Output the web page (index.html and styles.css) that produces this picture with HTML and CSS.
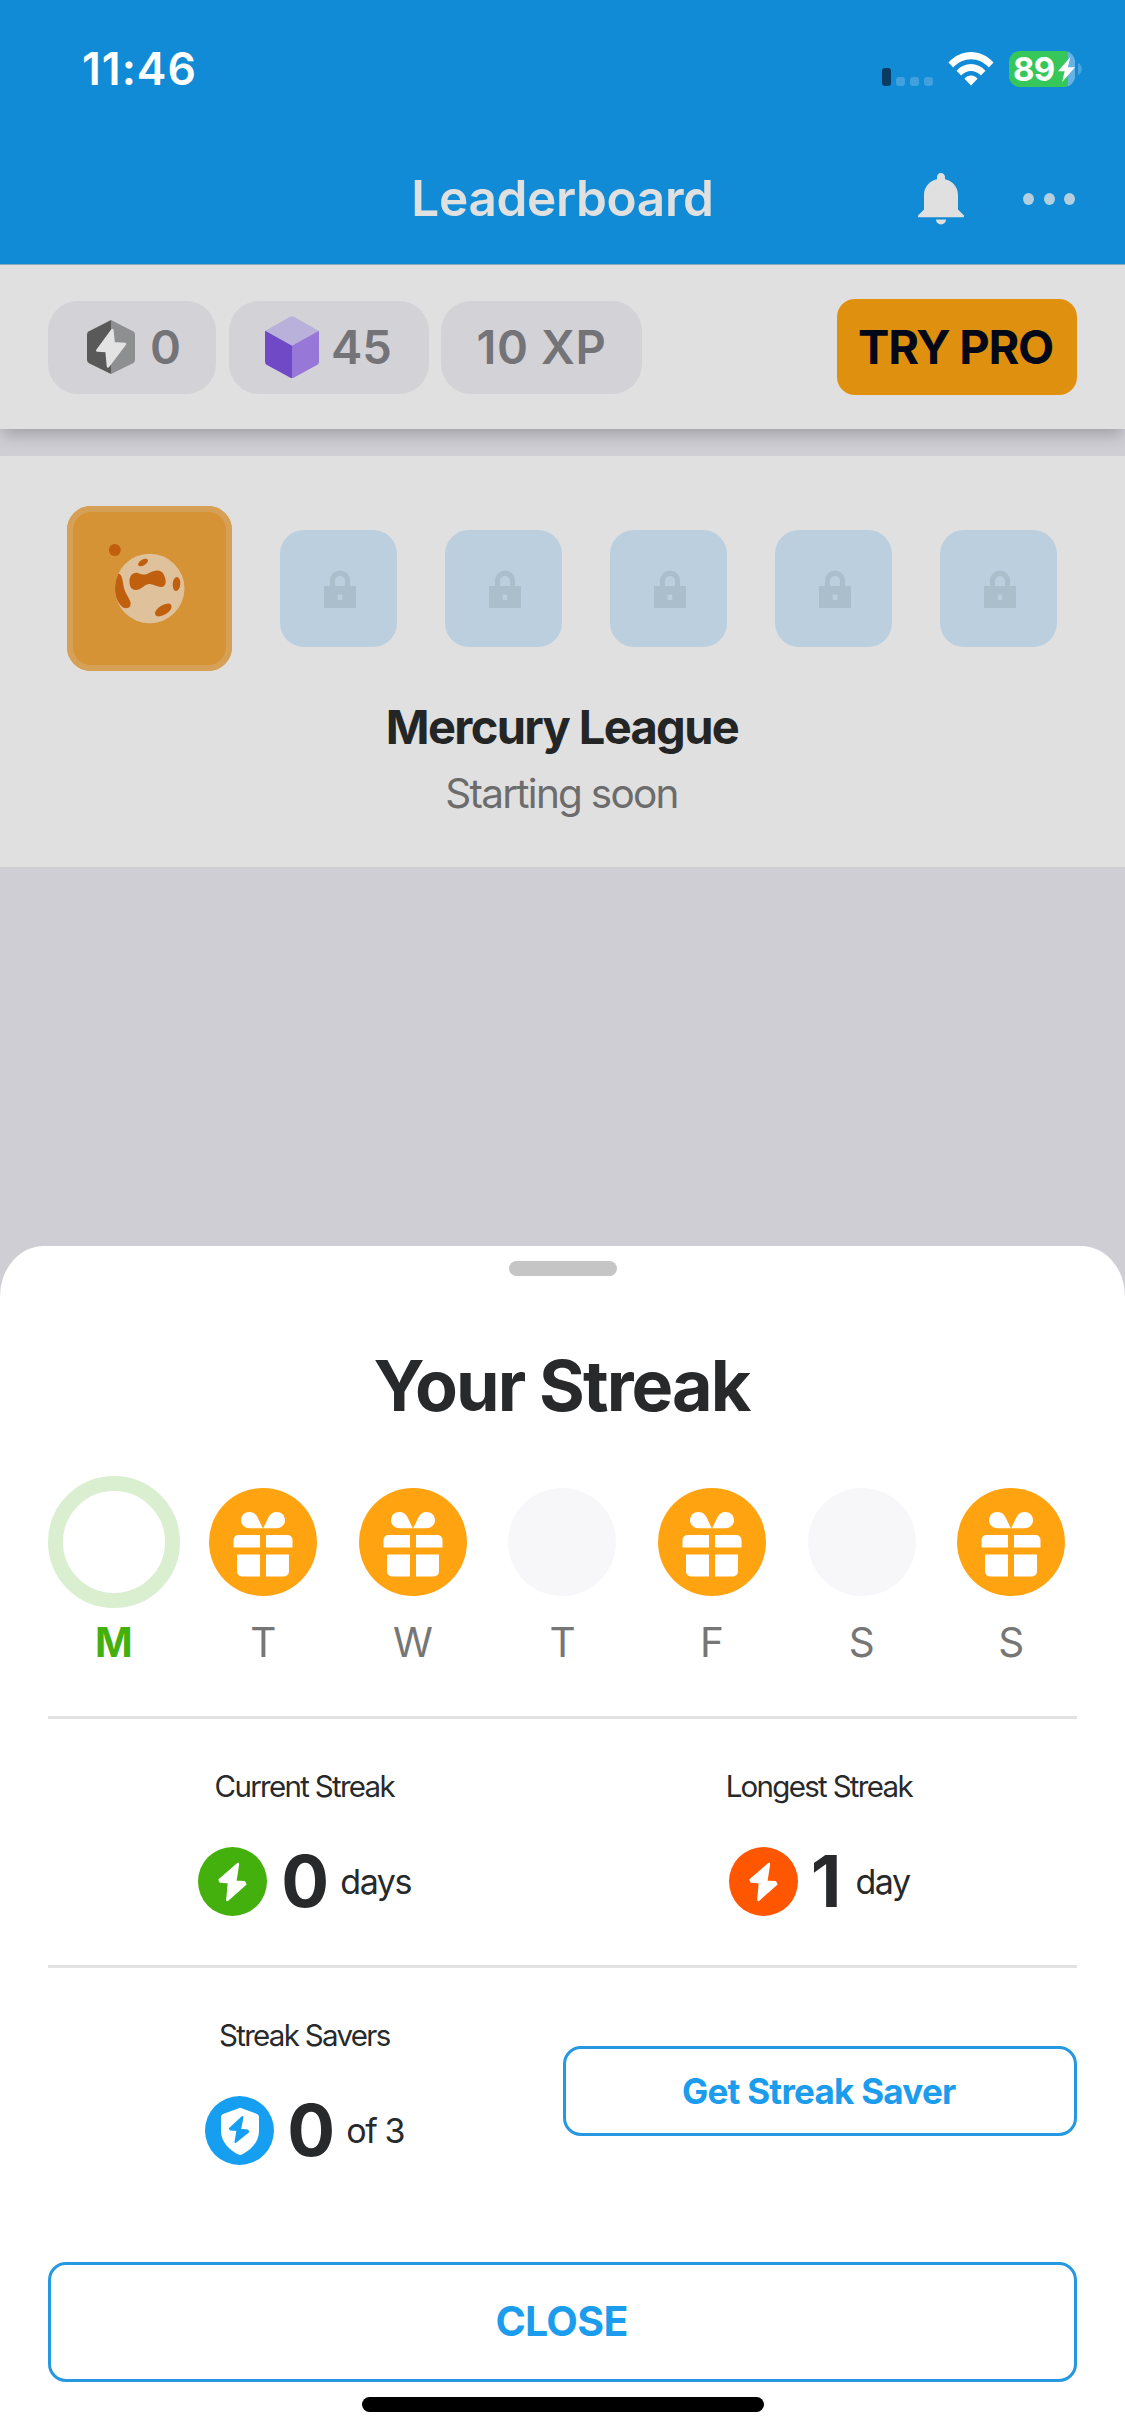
FILE: index.html
```html
<!DOCTYPE html>
<html lang="en">
<head>
<meta charset="utf-8">
<title>Leaderboard</title>
<link rel="stylesheet" href="styles.css">
</head>
<body>
<svg class="defs" aria-hidden="true">
  <symbol id="gift" viewBox="0 0 108 108">
    <g fill="#fff">
      <path d="M53.8 40.3H41C36 40.3 32 37 32 32.3 32 27.5 35.8 24 40.3 24c3.700 0 6.500 1.800 8.200 5.200z"/>
      <path d="M54.200 40.3H67C72 40.3 76 37 76 32.3 76 27.5 72.200 24 67.700 24c-3.700 0-6.500 1.800-8.200 5.200z"/>
      <path d="M51 47v12.500H24.500V52a5 5 0 0 1 5-5zM57 47v12.500h26.500V52a5 5 0 0 0-5-5z"/>
      <path d="M51 66.500v22H33a5 5 0 0 1-5-5v-17zM57 66.500v22h18a5 5 0 0 0 5-5v-17z"/>
    </g>
  </symbol>
  <symbol id="lock" viewBox="0 0 32 38">
    <path fill="#abbecb" fill-rule="evenodd" d="M0 16h6v-5.500a10 10 0 0 1 20 0V16h6v22H0zM11 16h10v-5a5 5 0 0 0-10 0zM13.700 24.500v5.500h4.600v-5.500z"/>
  </symbol>
  <symbol id="bolt" viewBox="0 0 69 69">
    <path fill="#fff" stroke="#fff" stroke-width="2.400" stroke-linejoin="round" d="M40 17 21.600 33 22.500 34.600l8.500.6L29.300 53 47.300 37.200 46.300 35.200l-9-.6z"/>
  </symbol>
</svg>
<div class="screen">
  <header class="top">
    <div class="status">
      <span class="clock">11:46</span>
      <div class="indicators">
        <div class="signal"><i class="bar"></i><i></i><i></i><i></i></div>
        <svg class="wifi" width="46" height="34" viewBox="0 0 46 34">
          <path fill="#fff" d="M0.500 10.500C13-3.500 33-3.500 45.500 10.500L40.800 15.500C31 4.500 15 4.500 5.200 15.500zM8.500 18.800C16.500 9.800 29.500 9.800 37.500 18.800L32.800 23.600C27.500 17.600 18.500 17.600 13.200 23.600zM16.500 26.800C20 22.500 26 22.500 29.500 26.800L23 33.500z"/>
        </svg>
        <div class="battery">
          <div class="cell"><span>89</span>
            <svg width="17" height="25" viewBox="0 0 17 25"><path fill="#fff" d="M12.300 0 0 14.200h6.600L4.200 25 17 10.300H9.900z"/></svg>
          </div>
          <svg width="4" height="12" viewBox="0 0 4 12"><path fill="#46a5df" d="M0 0c5 2 5 10 0 12z"/></svg>
        </div>
      </div>
    </div>
    <div class="nav">
      <h1>Leaderboard</h1>
      <div class="actions">
        <svg width="46" height="52" viewBox="0 0 46 52">
          <path fill="#e0e0e0" d="M23 0c2.300 0 4 1.700 4 4v2.300C34.500 8 40 14 40 22v14.500l5.500 5.500c1 1 .5 2.300-.8 2.300H1.300C0 44.300-.5 43 .5 42L6 36.500V22C6 14 11.500 8 19 6.300V4c0-2.300 1.700-4 4-4zM18 46.500h10a5 5 0 0 1-10 0z"/>
        </svg>
        <div class="more"><i></i><i></i><i></i></div>
      </div>
    </div>
  </header>

  <section class="stats">
    <div class="pill streak">
      <svg width="48" height="54" viewBox="0 0 48 54">
        <path fill="#595959" d="M24 0 2 11.200Q0 12.300 0 14.500V40q0 2 2 3.200L24 54z"/>
        <path fill="#8e8f90" d="M24 0 46 11.200Q48 12.300 48 14.500V40q0 2-2 3.200L24 54z"/>
        <path fill="#e3e3e3" stroke="#e3e3e3" stroke-width="2.500" stroke-linejoin="round" d="M25.300 10 10.300 30.500l9.200.5 1.500 15.500L38 24l-11.300-.8z"/>
      </svg>
      <span>0</span>
    </div>
    <div class="pill bits">
      <svg width="54" height="62" viewBox="0 0 54 62">
        <path fill="#bab1db" d="M25 .8q2-1 4 0L53.500 14.800 27 30 .5 14.800z"/>
        <path fill="#7049c6" d="M.3 14.800 27 29.700V62q-1 0-2-.6L2 49q-2-1-2-3.200V15.500z"/>
        <path fill="#9778d9" d="M53.700 14.800 27 29.700V62q1 0 2-.6L52 49q2-1 2-3.200V15.500z"/>
      </svg>
      <span>45</span>
    </div>
    <div class="pill xp"><span>10 XP</span></div>
    <button class="pro">TRY PRO</button>
  </section>

  <section class="league">
    <div class="tiles">
      <div class="tile current">
        <svg width="165" height="165" viewBox="0 0 165 165">
          <circle cx="82.700" cy="82.500" r="34.800" fill="#dfc19b"/>
          <g fill="#c05f0d">
            <circle cx="47.800" cy="44" r="6"/>
            <ellipse cx="76" cy="56.500" rx="5.500" ry="2.800" transform="rotate(-30 76 56.500)"/>
            <path d="M62.500 76C62 69 67 66 71 67c5 2 7 2 11 0 6-3 12-4 15 2s2 12-3 12-10-5-15-2c-4 2-6 5-10 5s-6.500-3-6.500-8z"/>
            <ellipse cx="109.500" cy="78" rx="3.800" ry="7" transform="rotate(5 109.500 78)"/>
            <path d="M51.500 67.500c4 1.500 4 7 5.500 14.500 2 8 9 13.500 6 18.500-1.200 2-5 2-7 1C50.500 97 48 90 48 82.500c0-6 1.500-11 3.500-15z"/>
            <ellipse cx="96.300" cy="104" rx="9.300" ry="4.800" transform="rotate(-32 96.300 104)"/>
          </g>
        </svg>
      </div>
      <div class="tile"><svg width="32" height="38"><use href="#lock"/></svg></div>
      <div class="tile"><svg width="32" height="38"><use href="#lock"/></svg></div>
      <div class="tile"><svg width="32" height="38"><use href="#lock"/></svg></div>
      <div class="tile"><svg width="32" height="38"><use href="#lock"/></svg></div>
      <div class="tile"><svg width="32" height="38"><use href="#lock"/></svg></div>
    </div>
    <h2>Mercury League</h2>
    <p>Starting soon</p>
  </section>

  <section class="sheet">
    <div class="handle"></div>
    <h2 class="title">Your Streak</h2>
    <div class="days">
      <div class="day today"><div class="slot"><i class="ring"></i></div><span>M</span></div>
      <div class="day"><div class="slot"><i class="dot reward"><svg width="108" height="108"><use href="#gift"/></svg></i></div><span>T</span></div>
      <div class="day"><div class="slot"><i class="dot reward"><svg width="108" height="108"><use href="#gift"/></svg></i></div><span>W</span></div>
      <div class="day"><div class="slot"><i class="dot"></i></div><span>T</span></div>
      <div class="day"><div class="slot"><i class="dot reward"><svg width="108" height="108"><use href="#gift"/></svg></i></div><span>F</span></div>
      <div class="day"><div class="slot"><i class="dot"></i></div><span>S</span></div>
      <div class="day"><div class="slot"><i class="dot reward"><svg width="108" height="108"><use href="#gift"/></svg></i></div><span>S</span></div>
    </div>
    <div class="row">
      <div class="stat">
        <span class="label">Current Streak</span>
        <div class="value"><i class="badge green"><svg width="69" height="69"><use href="#bolt"/></svg></i><b>0</b><span>days</span></div>
      </div>
      <div class="stat">
        <span class="label">Longest Streak</span>
        <div class="value"><i class="badge orange"><svg width="69" height="69"><use href="#bolt"/></svg></i><b class="one">1</b><span>day</span></div>
      </div>
    </div>
    <div class="row">
      <div class="stat">
        <span class="label">Streak Savers</span>
        <div class="value"><i class="badge blue"><svg width="69" height="69" viewBox="0 0 69 69">
          <path fill="#fff" d="M33.800 12.200q1.400-.7 2.800 0L52 18q2 .8 2 3v14c0 11-8 19-17 23.500q-1.800.8-3.600 0C24.500 54 16 46 16 35V21q0-2.200 2-3z"/>
          <path fill="#169ff1" stroke="#169ff1" stroke-width="2" stroke-linejoin="round" d="M37.500 21 25 32.500l.5 1 7 .5L30.500 46 43.200 35.800l-.6-1.300-7.600-.7z"/>
        </svg></i><b class="tight">0</b><span>of 3</span></div>
      </div>
      <button class="outline get">Get Streak Saver</button>
    </div>
    <button class="outline close">CLOSE</button>
    <div class="home"></div>
  </section>
</div>
</body>
</html>
```
FILE: styles.css
```css
* { box-sizing: border-box; margin: 0; padding: 0; }
body { font-family: Inter, "Liberation Sans", sans-serif; }
button { font-family: inherit; white-space: nowrap; }
svg { display: block; flex: none; }
i { display: block; flex: none; }
.defs { position: absolute; width: 0; height: 0; }

.screen {
  position: relative;
  display: flex;
  flex-direction: column;
  width: 1125px;
  height: 2436px;
  overflow: hidden;
  background: #cfced4;
}

/* Status bar and navigation */
.top { height: 264px; background: #118bd5; }
.status {
  display: flex;
  justify-content: space-between;
  align-items: center;
  height: 133px;
  padding: 5px 43px 0 82px;
  color: #fff;
}
.clock { font-size: 44.500px; font-weight: 600; letter-spacing: 1px; }
.indicators { display: flex; align-items: center; }
.signal { display: flex; align-items: flex-end; gap: 5px; height: 33px; margin-right: 15px; }
.signal i { width: 9px; height: 9px; border-radius: 3px; background: #41a1de; }
.signal .bar { height: 18px; background: #093c60; }
.wifi { margin-right: 15px; }
.battery { display: flex; align-items: center; gap: 3px; }
.cell {
  display: flex;
  align-items: center;
  gap: 4px;
  width: 66px;
  height: 36px;
  padding-left: 4px;
  border-radius: 11px;
  background: linear-gradient(90deg, #35c759 59px, #65b3e4 59px);
}
.cell span { font-size: 33px; font-weight: 700; letter-spacing: -0.8px; line-height: 36px; }
.nav {
  display: grid;
  grid-template-columns: 1fr auto 1fr;
  align-items: center;
  height: 131px;
  padding: 0 50px;
}
.nav h1 {
  grid-column: 2;
  padding-bottom: 2px;
  font-size: 49.500px;
  font-weight: 600;
  letter-spacing: -0.35px;
  color: #e0e0e0;
}
.actions { display: flex; justify-content: flex-end; align-items: center; gap: 59px; }
.more { display: flex; gap: 9.500px; }
.more i { width: 11px; height: 12px; border-radius: 50%; background: #b3cfe0; }

/* Stat pills */
.stats {
  display: flex;
  align-items: center;
  height: 165px;
  padding: 0 48px;
  border-top: 1px solid #8caabd;
  background: #e0e0e0;
  box-shadow: 0 9px 14px -3px rgba(0, 0, 0, 0.22);
}
.pill {
  display: flex;
  align-items: center;
  height: 93px;
  padding-bottom: 1px;
  border-radius: 30px;
  background: #d3d2d7;
  color: #747378;
  font-size: 47px;
  font-weight: 600;
}
.streak { width: 168px; padding-left: 39px; gap: 15px; margin-right: 13px; }
.bits { width: 200px; padding-left: 36px; gap: 12px; margin-right: 12px; }
.xp { width: 201px; justify-content: center; letter-spacing: 0.6px; }
.pro {
  width: 240px;
  height: 96px;
  margin-left: auto;
  padding: 0 3px 1px 0;
  border: 0;
  border-radius: 18px;
  background: #df900e;
  color: #020817;
  font-size: 47px;
  font-weight: 700;
  letter-spacing: -1.300px;
}

/* League card */
.league {
  position: relative;
  height: 411px;
  margin-top: 27px;
  padding-top: 50px;
  background: #e0e0e0;
  text-align: center;
}
.tiles { display: flex; justify-content: flex-start; align-items: center; gap: 48px; padding-left: 67px; }
.tile {
  display: flex;
  justify-content: center;
  align-items: center;
  width: 117px;
  height: 117px;
  padding-left: 2px;
  border-radius: 24px;
  background: #bbcfdf;
}
.tile.current {
  width: 165px;
  height: 165px;
  padding: 0;
  background: #d59336;
  box-shadow: inset 0 0 0 6px #d6a056;
}
.league h2 { margin-top: 28px; padding-right: 1px; font-size: 47px; line-height: 56px; letter-spacing: -1.640px; color: #242525; }
.league p { margin-top: 14px; padding-right: 2px; font-size: 40.500px; line-height: 50px; letter-spacing: -1.750px; color: #6c6c6c; }

/* Bottom sheet */
.sheet {
  position: absolute;
  left: 0;
  right: 0;
  bottom: 0;
  display: flex;
  flex-direction: column;
  height: 1190px;
  padding: 15px 48px 24px;
  border-radius: 44px 44px 0 0 / 50px 50px 0 0;
  background: #fff;
  color: #28292b;
}
.handle { width: 108px; height: 15px; margin: 0 auto; border-radius: 7.500px; background: #c5c5c5; }
.title { margin-top: 68px; padding-right: 2px; font-size: 70px; line-height: 84px; letter-spacing: -1.900px; text-align: center; }
.days { display: grid; grid-template-columns: repeat(7, 1fr); margin: 48px -9px 48px; }
.day { display: flex; flex-direction: column; align-items: center; gap: 10px; font-size: 40.500px; line-height: 50px; color: #767676; }
.slot { display: flex; align-items: center; height: 132px; }
.ring { width: 132px; height: 132px; border: 15px solid #daefd0; border-radius: 50%; }
.dot { width: 108px; height: 108px; border-radius: 50%; background: #f7f7f9; }
.reward { background: #ffa310; }
.today span { font-weight: 700; color: #44b00d; }
.row {
  display: grid;
  grid-template-columns: 1fr 1fr;
  align-items: center;
  height: 249px;
  border-top: 3px solid #e2e2e2;
}
.stat { display: flex; flex-direction: column; align-items: center; gap: 43px; }
.label { padding-right: 2px; font-size: 29.500px; line-height: 36px; letter-spacing: -1.700px; }
.value { display: flex; align-items: center; height: 69px; padding-right: 1px; }
.value b { margin-left: 14px; font-size: 71px; line-height: 69px; }
.value .tight { margin-left: 13px; }
.value .one { margin-left: 13px; }
.value span { margin-left: 11px; font-size: 34px; letter-spacing: -1.400px; }
.value .one + span { margin-left: 14px; }
.badge { border-radius: 50%; }
.green { background: #44b00d; }
.orange { background: #ff5602; }
.blue { background: #169ff1; }
.outline {
  display: flex;
  justify-content: center;
  align-items: center;
  border: 3px solid #2698e2;
  border-radius: 18px;
  background: #fff;
  color: #1b9ced;
  font-weight: 700;
}
.get { height: 90px; padding-right: 2px; font-size: 35px; letter-spacing: -0.750px; }
.close { height: 120px; flex: none; margin-top: 48px; padding: 0 2px 2px 0; font-size: 41px; letter-spacing: -0.700px; }
.home { flex: none; width: 402px; height: 15px; margin: 15px auto 0; border-radius: 7.500px; background: #000; }
```
